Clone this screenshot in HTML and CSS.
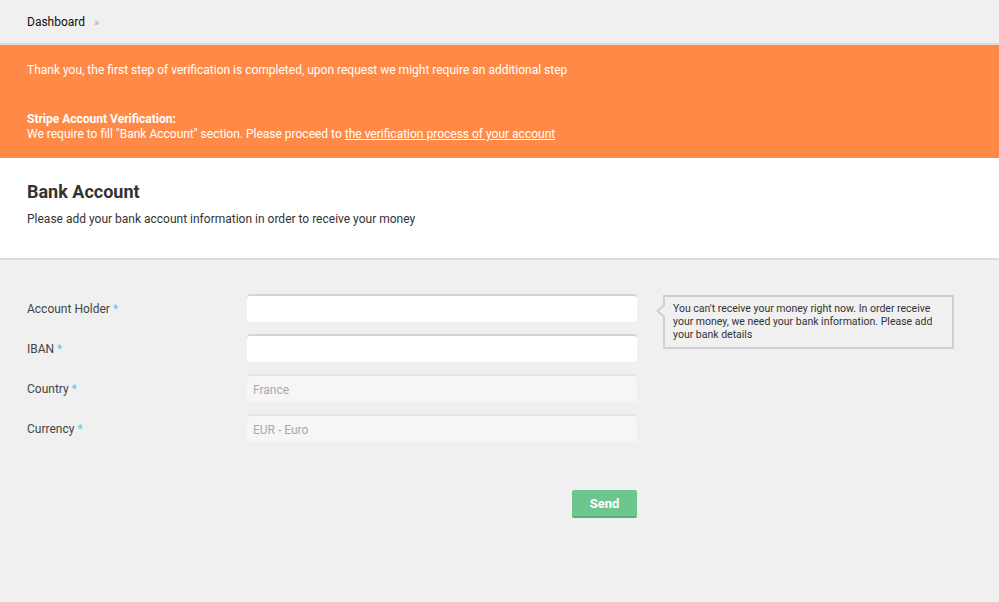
FILE: index.html
```html
<!DOCTYPE html>
<html lang="en">
<head>
<meta charset="utf-8">
<title>Bank Account</title>
<link rel="stylesheet" href="styles.css">
</head>
<body>
<nav class="breadcrumb">
  <a class="crumb" href="#">Dashboard</a>
  <span class="sep">»</span>
</nav>

<div class="alert">
  <p class="alert-line">Thank you, the first step of verification is completed, upon request we might require an additional step</p>
  <p class="alert-block">
    <strong>Stripe Account Verification:</strong><br>
    We require to fill "Bank Account" section. Please proceed to <a href="#">the verification process of your account</a>
  </p>
</div>

<header class="page-head">
  <h1>Bank Account</h1>
  <p>Please add your bank account information in order to receive your money</p>
</header>

<form class="bank-form">
  <label class="field-label" for="holder">Account Holder <span class="req">*</span></label>
  <input class="field" id="holder" type="text">
  <div class="hint">You can't receive your money right now. In order receive your money, we need your bank information. Please add your bank details</div>

  <label class="field-label" for="iban">IBAN <span class="req">*</span></label>
  <input class="field" id="iban" type="text">

  <label class="field-label" for="country">Country <span class="req">*</span></label>
  <input class="field" id="country" type="text" value="France" disabled>

  <label class="field-label" for="currency">Currency <span class="req">*</span></label>
  <input class="field" id="currency" type="text" value="EUR - Euro" disabled>

  <button class="send" type="button">Send</button>
</form>
</body>
</html>
```

FILE: styles.css
```css
* { box-sizing: border-box; }

body {
  margin: 0;
  background: #f0f0f0;
  font-family: Roboto, "Noto Sans", Arial, sans-serif;
  color: #333;
  min-height: 602px;
}

p { margin: 0; }

/* breadcrumb bar */
.breadcrumb {
  height: 45px;
  padding: 1px 27px 0;
  display: flex;
  align-items: center;
  gap: 9px;
  border-bottom: 2px solid #dcdcdc;
}
.crumb {
  color: #111;
  text-decoration: none;
  font-size: 12px;
}
.sep {
  color: #a8a8a8;
  font-size: 11px;
}

/* verification notice */
.alert {
  background: #ff8a47;
  color: #fff;
  font-size: 12px;
  line-height: 15px;
  padding: 18px 27px 16px;
}
.alert-block { margin-top: 34px; }
.alert strong { font-weight: 700; }
.alert a { color: #fff; text-decoration: underline; }

/* page header */
.page-head {
  background: #fff;
  height: 102px;
  padding: 22px 27px 0;
  border-bottom: 2px solid #dcdcdc;
}
.page-head h1 {
  margin: 0;
  font-size: 18px;
  line-height: 24px;
  font-weight: 700;
  color: #333;
}
.page-head p {
  margin-top: 8px;
  font-size: 12px;
  line-height: 15px;
  color: #333;
}

/* form grid */
.bank-form {
  display: grid;
  grid-template-columns: 220px 390px 290px;
  row-gap: 12px;
  padding: 34px 27px 0;
  align-items: center;
}
.field-label {
  grid-column: 1;
  font-size: 12px;
  color: #444;
  padding-top: 1px;
}
.req { color: #6bbfd6; }

.field {
  grid-column: 2;
  height: 28px;
  border: 0;
  border-top: 2px solid #d4d4d4;
  border-radius: 4px;
  background: #fff;
  padding: 1px 6px 0;
  font-family: inherit;
  font-size: 12px;
  color: #333;
  outline: none;
}
.field:disabled {
  background: #f6f6f6;
  border-top-color: #e4e4e4;
  color: #a9a9a9;
}

/* help bubble beside the first fields */
.hint {
  grid-column: 3;
  grid-row: 1 / 3;
  align-self: start;
  position: relative;
  margin: 1px 0 0 26px;
  width: 291px;
  border: 2px solid #cfcfcf;
  background: #f0f0f0;
  padding: 5px 8px 6px 8px;
  font-size: 10.5px;
  line-height: 13px;
  color: #333;
}
.hint::before,
.hint::after {
  content: "";
  position: absolute;
  top: 6px;
  width: 0;
  height: 0;
  border-style: solid;
}
.hint::before {
  left: -9px;
  border-width: 8px 9px 8px 0;
  border-color: transparent #cfcfcf transparent transparent;
}
.hint::after {
  left: -6px;
  top: 8px;
  border-width: 6px 7px 6px 0;
  border-color: transparent #f0f0f0 transparent transparent;
}

.send {
  grid-column: 2;
  justify-self: end;
  margin-top: 36px;
  width: 65px;
  height: 28px;
  border: 0;
  border-bottom: 2px solid #5aae7c;
  border-radius: 2px;
  background: #6cc68e;
  color: #fff;
  font-family: inherit;
  font-size: 13px;
  font-weight: 700;
  cursor: pointer;
}
```
